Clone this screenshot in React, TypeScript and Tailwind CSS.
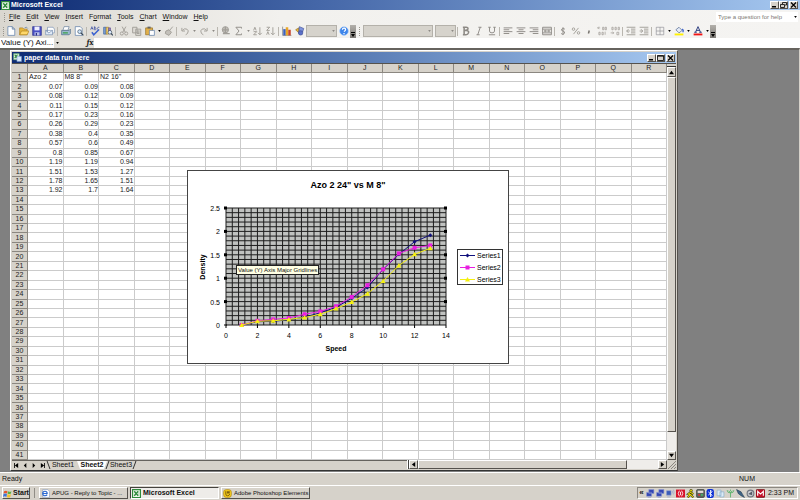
import React from "react";

const COLUMNS = "ABCDEFGHIJKLMNOPQR".split("");

const SHEET: string[][] = [
  ["Azo 2", 'M8 8"', 'N2 16"'],
  ["0.07", "0.09", "0.08"],
  ["0.08", "0.12", "0.09"],
  ["0.11", "0.15", "0.12"],
  ["0.17", "0.23", "0.16"],
  ["0.26", "0.29", "0.23"],
  ["0.38", "0.4", "0.35"],
  ["0.57", "0.6", "0.49"],
  ["0.8", "0.85", "0.67"],
  ["1.19", "1.19", "0.94"],
  ["1.51", "1.53", "1.27"],
  ["1.78", "1.65", "1.51"],
  ["1.92", "1.7", "1.64"],
];

const RAISED = "border border-t-white border-l-white border-r-[#55524d] border-b-[#55524d] bg-[#d6d2ca]";

/* ---------- icons ---------- */

const GREY = "#a19e98";

const ICONS: Record<string, React.ReactNode> = {
  new: <path d="M3 1h7l4 4v10H3z M10 1v4h4" fill="#fff" stroke="#4a6ea0" />,
  open: (
    <>
      <path d="M1 3h5l2 2h5v9H1z" fill="#e9b83c" stroke="#a87a1c" />
      <path d="M4 8h12l-3 6H1z" fill="#ffd86a" stroke="#a87a1c" />
      <path d="M9 3q3-3 5 1" fill="none" stroke="#4a6ea0" />
    </>
  ),
  save: (
    <>
      <path d="M1 1h14v14H1z" fill="#4a50c4" stroke="#2b2f86" />
      <path d="M4 1h8v6H4z" fill="#eef" />
      <path d="M4 10h8v5H4z" fill="#b9bfe8" />
      <path d="M6 11h2v4H6z" fill="#2b2f86" />
    </>
  ),
  mail: (
    <>
      <path d="M4 2h9l2 3v6H4z" fill="#fff" stroke="#6e88ad" />
      <path d="M1 7h11v7H1z M1 7l5 4 6-4" fill="#e2ebf7" stroke="#6e88ad" />
    </>
  ),
  print: (
    <>
      <path d="M5 1h8l-2 6H3z" fill="#fff" stroke="#5b7797" />
      <path d="M1 7h12l2-2v7l-2 2H1z" fill="#9bb9cf" stroke="#42617f" />
      <path d="M3 10h8v2H3z" fill="#3ca24a" />
    </>
  ),
  preview: (
    <>
      <path d="M2 1h8l3 3v11H2z" fill="#fff" stroke="#4a6ea0" />
      <circle cx="9" cy="9" r="3" fill="#cfe6fb" stroke="#345" />
      <path d="M11 11l4 4" stroke="#345" strokeWidth="2" />
    </>
  ),
  spell: (
    <>
      <path d="M1 6l2-5 2 5M2 4h3M7 1v5h2q2-1 0-3H7q3-1 0-2M15 2q-3-1-3 2t3 2" fill="none" stroke="#31479e" />
      <path d="M3 10l3 4 8-8" fill="none" stroke="#3c63cf" strokeWidth="2.5" />
    </>
  ),
  research: (
    <>
      <path d="M1 2h4v11H1z" fill="#7aa0d8" stroke="#3a5f9c" />
      <path d="M5 2h4v11H5z" fill="#f0cd6b" stroke="#9c7a2a" />
      <path d="M9 3h3v9H9z" fill="#9a83c8" stroke="#5d4a91" />
      <circle cx="11" cy="10" r="3" fill="#dceafb" stroke="#345" />
      <path d="M13 12l3 3" stroke="#345" strokeWidth="2" />
    </>
  ),
  cut: (
    <g fill="none" stroke={GREY} strokeWidth="1.5">
      <path d="M5 1l5 9M11 1L6 10" />
      <circle cx="4.500" cy="12" r="2.500" />
      <circle cx="11.500" cy="12" r="2.500" />
    </g>
  ),
  copy: <path d="M1 2h7v9H1z M6 5h8v10H6z M8 8h4M8 10h4M8 12h4" fill="#dedbd5" stroke={GREY} strokeWidth="1.5" />,
  paste: (
    <>
      <path d="M1 3h11v11H1z" fill="#e2b04a" stroke="#8f6718" />
      <path d="M4 1h5v3H4z" fill="#666" />
      <path d="M7 7h8v8H7z" fill="#fff" stroke="#4a6ea0" />
    </>
  ),
  painter: <path d="M14 1l-5 6M3 8l5-2 4 4-4 5-6-3z" fill="#c3c0ba" stroke={GREY} strokeWidth="1.5" />,
  undo: <path d="M3 3v5h5M4 7q3-4 7-2t1 7l-3 2" fill="none" stroke={GREY} strokeWidth="1.5" />,
  redo: <path d="M13 3v5H8M12 7q-3-4-7-2t-1 7l3 2" fill="none" stroke={GREY} strokeWidth="1.5" />,
  link: (
    <>
      <circle cx="7" cy="6" r="5" fill="#c3c0ba" stroke={GREY} strokeWidth="1.5" />
      <path d="M3 12h5M8 12h6M2 6h10M7 1v10" stroke={GREY} strokeWidth="2" />
    </>
  ),
  sum: <path d="M12 4V2H3l5 6-5 6h9v-2" fill="none" stroke="#8f8c86" strokeWidth="1.5" />,
  sortA: <path d="M1 7l2-5 2 5M1 9h5l-5 5h5M11 2v12M8 11l3 3 3-3" fill="none" stroke={GREY} strokeWidth="1.5" />,
  sortD: <path d="M1 2h5L1 7h5M1 14l2-5 2 5M11 2v12M8 11l3 3 3-3" fill="none" stroke={GREY} strokeWidth="1.5" />,
  chart: (
    <>
      <path d="M1 1v14h14" fill="none" stroke="#666" />
      <path d="M2 5h4v10H2z" fill="#3b62c0" />
      <path d="M6 2h4v13H6z" fill="#e8a528" />
      <path d="M10 6h4v9h-4z" fill="#c8452c" />
    </>
  ),
  draw: (
    <>
      <path d="M1 6l5-3v8z" fill="#e9b83c" stroke="#8f6718" />
      <path d="M7 1l7 3-2 6-6 2z" fill="#7f94dd" stroke="#3d4d93" />
      <circle cx="9" cy="11" r="3.500" fill="#5a6fc8" stroke="#3d4d93" />
    </>
  ),
  help: (
    <>
      <circle cx="8" cy="8" r="7" fill="#3f86ea" stroke="#b6d3f8" />
      <path d="M5.500 6q0-3 3-2.500t1.500 3.500L8 9M8 11v2" fill="none" stroke="#fff" strokeWidth="2" />
    </>
  ),
  bold: <path d="M3 2h5q4 0 3 3-1 2-3 2H5h4q4 1 3 4-1 3-4 3H3M5 2v12" fill="none" stroke="#8d8a85" strokeWidth="2.5" />,
  italic: <path d="M7 2h5M4 14h5M10 2L6 14" fill="none" stroke="#8d8a85" strokeWidth="1.5" />,
  underline: <path d="M2 2h4M10 2h4M4 2v6q0 3 4 3t4-3V2M3 14h10" fill="none" stroke="#8d8a85" strokeWidth="1.5" />,
  alignLeft: <path d="M1 3h14M1 6h9M1 9h14M1 12h9" stroke="#8d8a85" strokeWidth="1.5" />,
  alignCenter: <path d="M1 3h14M4 6h8M1 9h14M4 12h8" stroke="#8d8a85" strokeWidth="1.5" />,
  alignRight: <path d="M1 3h14M6 6h9M1 9h14M6 12h9" stroke="#8d8a85" strokeWidth="1.5" />,
  merge: <path d="M1 2h14v12H1zM1 5h14M1 11h14M3 8h10M5 6v4M11 6v4" fill="none" stroke="#8d8a85" strokeWidth="1.5" />,
  dollar: <path d="M11 5q-3-2-5 0t2 3 2 4-5 0M8 2v12" fill="none" stroke="#8d8a85" strokeWidth="1.5" />,
  percent: (
    <g fill="none" stroke={GREY} strokeWidth="1.500">
      <circle cx="4" cy="5" r="2" />
      <circle cx="12" cy="11" r="2" />
      <path d="M12 3L4 13" />
    </g>
  ),
  comma: <path d="M8 7v2l-1 3" fill="none" stroke="#77746f" strokeWidth="2.5" />,
  moreDec: <path d="M5 3H1l2-2M1 3l2 2M9 2h2v4H9zM13 2h2v4h-2zM3 10h2v4H3zM8 10h2v4H8zM13 9v5" fill="none" stroke={GREY} strokeWidth="1.2" />,
  lessDec: <path d="M3 2h2v4H3zM8 2h2v4H8zM13 2h2v4h-2zM1 11h5l-2-2M6 11l-2 2M11 10h3v4h-3z" fill="none" stroke={GREY} strokeWidth="1.2" />,
  outdent: <path d="M1 2h14M8 5h7M8 8h7M8 11h7M1 14h14M6 8H1l3-3M1 8l3 3" fill="none" stroke={GREY} strokeWidth="1.5" />,
  indent: <path d="M1 2h14M8 5h7M8 8h7M8 11h7M1 14h14M1 8h5L3 5M6 8l-3 3" fill="none" stroke={GREY} strokeWidth="1.5" />,
  borders: <path d="M2 2h12v12H2zM8 2v12M2 8h12" fill="none" stroke="#8a8a92" strokeWidth="1" />,
  fill: (
    <>
      <path d="M3 6l5-4 5 5-5 4z" fill="#e6ecf7" stroke="#3f5684" />
      <path d="M13 5q3 2 1 5" fill="none" stroke="#3c63cf" strokeWidth="2" />
      <path d="M1 12h14v3H1z" fill="#fff200" />
    </>
  ),
  fontColor: (
    <>
      <path d="M4 10l4-9 4 9M5 7h6M2 10h4M10 10h4" fill="none" stroke="#27397c" strokeWidth="1.5" />
      <path d="M1 12h14v3H1z" fill="#f01414" />
    </>
  ),
  excel: (
    <>
      <path d="M1 1h14v14H1z" fill="#f0f8ee" stroke="#2f8a3c" strokeWidth="2" />
      <path d="M4 4l7 8M11 4l-7 8" stroke="#2f8a3c" strokeWidth="2.500" />
      <path d="M12 4v8" stroke="#8fc496" />
    </>
  ),
  book: (
    <>
      <path d="M1 1h10v11H1z" fill="#e4f4e2" stroke="#58a865" />
      <path d="M3 3l5 6M8 3L3 9" stroke="#2f8a3c" strokeWidth="2" />
      <path d="M7 6h8v9H7z" fill="#d7e8fb" stroke="#7a9ccc" />
    </>
  ),
  flag: (
    <>
      <path d="M2 4q3-2 6 0L7 8Q4 6 1 8z" fill="#e8552b" />
      <path d="M9 4q3 2 6 0l-1 4q-3 2-6 0z" fill="#5bb040" />
      <path d="M1 9q3-2 6 0l-1 5q-3-2-6 0z" fill="#3f72d8" />
      <path d="M8 9q3 2 6 0l-1 5q-3 2-6 0z" fill="#f3c22c" />
    </>
  ),
  ie: (
    <>
      <path d="M3 1h9l3 3v11H3z" fill="#fff" stroke="#7d8fb0" />
      <path d="M3 8h8q0-4-4-4T3 8t4 4q3 0 4-2" fill="none" stroke="#2d6ad0" strokeWidth="2" />
    </>
  ),
  photoshop: (
    <>
      <rect x="1" y="1" width="14" height="14" rx="5" fill="#f2c81c" stroke="#a5830c" />
      <path d="M5 4v5q0 3 3 3t4-3" fill="none" stroke="#6b4f08" strokeWidth="1.5" />
      <path d="M7 4h5v4H7z" fill="#7d6011" />
    </>
  ),
};

const TRAY: { name: string; art: React.ReactNode }[] = [
  { name: "Network one", art: <path d="M5 1h9v7H5zM1 6h9v7H1zM3 15h6" fill="#3346b4" stroke="#8e9bd0" /> },
  { name: "Network two", art: <path d="M5 1h9v7H5zM1 6h9v7H1zM3 15h6" fill="#3346b4" stroke="#8e9bd0" /> },
  {
    name: "Wireless",
    art: (
      <>
        <path d="M1 3h8v8H1zM2 14h6" fill="#3b5cb8" stroke="#8e9bd0" />
        <path d="M11 3q2 2 0 5M13 1q3 4 0 9" fill="none" stroke="#8e9bd0" />
      </>
    ),
  },
  {
    name: "Antivirus",
    art: (
      <>
        <path d="M0 1h16v14H0z" fill="#d8142c" />
        <path d="M6 3q-4 5 0 10M10 3q4 5 0 10M8 5v6" fill="none" stroke="#fff" strokeWidth="1.5" />
      </>
    ),
  },
  {
    name: "Messenger",
    art: (
      <>
        <circle cx="9" cy="3" r="2.500" fill="#e8d800" stroke="#222" />
        <path d="M8 6l-4 3 4 1-5 5M8 10l5 5M8 6l5 3" fill="none" stroke="#222" strokeWidth="3.500" />
        <path d="M8 6l-4 3 4 1-5 5M8 10l5 5M8 6l5 3" fill="none" stroke="#e8d800" strokeWidth="2" />
      </>
    ),
  },
  {
    name: "Scheduler",
    art: (
      <>
        <rect x="1" y="1" width="14" height="14" rx="2" fill="#5d6660" stroke="#222" />
        <path d="M3 3h10v4H3z" fill="#e5d8d8" />
        <path d="M4 9h3v3H4z" fill="#d33" />
        <path d="M9 9h3v3H9z" fill="#4b6" />
      </>
    ),
  },
  {
    name: "Bluetooth",
    art: (
      <>
        <rect x="1" y="0" width="13" height="16" rx="4" fill="#0a2fd6" />
        <path d="M4 5l7 6-3 3V2l3 3-7 6" fill="none" stroke="#fff" strokeWidth="1.5" />
      </>
    ),
  },
  { name: "Documents", art: <path d="M2 2h7v10H2zM7 5h7v9H7z" fill="#dcebf6" stroke="#7fa5c4" /> },
  { name: "Signal", art: <path d="M2 2q0 5 6 5t6-5M8 7v8M5 3l3 4 3-4M8 1v3" fill="none" stroke="#56b267" strokeWidth="1.5" /> },
  { name: "Stylus", art: <path d="M1 1l8 4 3 5 3 5-6-3-5-4z" fill="#3f6486" stroke="#20384f" /> },
  {
    name: "Volume",
    art: (
      <>
        <circle cx="8" cy="8" r="6" fill="#c9ccd2" stroke="#70757f" strokeWidth="2" />
        <path d="M4 9l7-5v7z" fill="#555b66" />
      </>
    ),
  },
  {
    name: "Security",
    art: (
      <>
        <rect x="0" y="1" width="16" height="14" rx="2" fill="#c4122b" stroke="#500" />
        <path d="M3 12V4l5 5 5-5v8" fill="none" stroke="#fff" strokeWidth="2" />
      </>
    ),
  },
];

function Icon({ name, className = "size-[10px]" }: { name: string; className?: string }) {
  return (
    <svg viewBox="0 0 16 16" className={`block shrink-0 ${className}`} aria-hidden="true">
      {ICONS[name]}
    </svg>
  );
}

/* ---------- toolbar parts ---------- */

function Tool({ icon }: { icon: string }) {
  return (
    <button type="button" aria-label={icon} className="flex h-full w-[13px] shrink-0 items-center justify-center">
      <Icon name={icon} />
    </button>
  );
}

function Sep() {
  return (
    <span className="flex w-[3px] shrink-0 justify-center">
      <span className="h-[9px] w-px bg-[#b9b6af]" />
    </span>
  );
}

function Drop({ dim = false }: { dim?: boolean }) {
  return (
    <button type="button" aria-label="More choices" className="flex h-full w-[6px] shrink-0 items-center justify-center">
      <svg viewBox="0 0 4 3" className={`h-[2px] w-[3px] ${dim ? "fill-[#8d8a85]" : "fill-black"}`}>
        <path d="M0 0h4L2 3z" />
      </svg>
    </button>
  );
}

function Grip() {
  return <span className="h-[9px] w-px shrink-0 border-l border-dotted border-[#99958d]" />;
}

function BarEnd() {
  return (
    <button type="button" aria-label="Toolbar options" className="flex h-[13px] w-[6px] shrink-0 items-end justify-center bg-linear-to-b from-[#b3b0ab] to-[#7e7b76] pb-px">
      <svg viewBox="0 0 4 5" className="h-[5px] w-[4px]">
        <path d="M0 0h4v1H0zM0 2h4L2 5z" />
      </svg>
    </button>
  );
}

function DisabledCombo({ label, width }: { label: string; width: string }) {
  return (
    <span className={`relative flex h-[12px] shrink-0 ${width}`}>
      <select aria-label={label} disabled className="h-full w-full appearance-none border border-[#b4b1aa] bg-[#d6d3cc]">
        <option />
      </select>
      <span className="absolute inset-y-0 right-px flex items-center">
        <Drop dim />
      </span>
    </span>
  );
}

function WindowButtons({ restore = false }: { restore?: boolean }) {
  const box = `flex h-[8px] w-[9px] items-center justify-center ${RAISED}`;
  return (
    <div className="ml-auto flex shrink-0 items-center">
      <button type="button" aria-label="Minimize" className={box}>
        <svg viewBox="0 0 7 6" className="h-[6px] w-[7px]"><path d="M1 4h4v1.500H1z" /></svg>
      </button>
      <button type="button" aria-label={restore ? "Restore" : "Maximize"} className={box}>
        <svg viewBox="0 0 7 6" className="h-[6px] w-[7px]" fill="none" stroke="#000" strokeWidth="0.8">
          {restore ? <path d="M2.500 2V.5h4V3H5M.5 2.500h4v3h-4z" /> : <path d="M.5 1.200h6M.5.5h6v5h-6z" />}
        </svg>
      </button>
      <button type="button" aria-label="Close" className={`ml-px ${box}`}>
        <svg viewBox="0 0 7 6" className="h-[6px] w-[7px]" stroke="#000" strokeWidth="1.200"><path d="M1 .5l5 5M6 .5l-5 5" /></svg>
      </button>
    </div>
  );
}

function Bars() {
  const menus = ["File", "Edit", "View", "Insert", "Format", "Tools", "Chart", "Window", "Help"];
  return (
    <div className="shrink-0 bg-linear-to-r from-[#dad7d0] via-[#f2f1ee] via-35% to-[#f5f4f2]">
      <nav className="flex h-[14px] items-center pl-[4px]">
        <Grip />
        <ul className="flex gap-[6px] pl-[4px]">
          {menus.map((m) => {
            const at = m === "Format" ? 1 : 0;
            return (
              <li key={m}>
                <button type="button" className="block">
                  {m.slice(0, at)}
                  <span className="underline">{m[at]}</span>
                  {m.slice(at + 1)}
                </button>
              </li>
            );
          })}
        </ul>
        <input
          aria-label="Help question"
          placeholder="Type a question for help"
          className="ml-auto h-[10px] w-[76px] bg-white pl-[2px] text-[6px] leading-[10px] placeholder:text-[#7c7974]"
        />
        <span className="mr-[2px] flex h-[10px] bg-white">
          <Drop />
        </span>
      </nav>
      <div className="flex h-[14px] items-center pl-[3px]">
        <Grip />
        <Tool icon="new" /><Tool icon="open" /><Tool icon="save" /><Tool icon="mail" /><Sep />
        <Tool icon="print" /><Tool icon="preview" /><Sep />
        <Tool icon="spell" /><Tool icon="research" /><Sep />
        <Tool icon="cut" /><Tool icon="copy" /><Tool icon="paste" /><Drop /><Tool icon="painter" /><Sep />
        <Tool icon="undo" /><Drop dim /><Tool icon="redo" /><Drop dim /><Sep />
        <Tool icon="link" /><Tool icon="sum" /><Drop dim /><Tool icon="sortA" /><Tool icon="sortD" /><Sep />
        <Tool icon="chart" /><Tool icon="draw" />
        <DisabledCombo label="Zoom" width="w-[31px]" />
        <Tool icon="help" />
        <BarEnd />
        <span className="flex w-[7px] shrink-0 justify-center"><Grip /></span>
        <DisabledCombo label="Font" width="w-[70px]" />
        <span className="w-[2px] shrink-0" />
        <DisabledCombo label="Font size" width="w-[21px]" />
        <Sep />
        <Tool icon="bold" /><Tool icon="italic" /><Tool icon="underline" /><Sep />
        <Tool icon="alignLeft" /><Tool icon="alignCenter" /><Tool icon="alignRight" /><Tool icon="merge" /><Sep />
        <Tool icon="dollar" /><Tool icon="percent" /><Tool icon="comma" /><Tool icon="moreDec" /><Tool icon="lessDec" /><Sep />
        <Tool icon="outdent" /><Tool icon="indent" /><Sep />
        <Tool icon="borders" /><Drop /><Tool icon="fill" /><Drop /><Tool icon="fontColor" /><Drop />
        <BarEnd />
      </div>
      <div className="flex h-[10px] items-stretch text-[8px] leading-[10px]">
        <input aria-label="Name box" defaultValue="Value (Y) Axi..." className="w-[54px] bg-white pl-px" />
        <Drop />
        <span className="w-[26px] bg-[#e4e1db]" />
        <button type="button" className="w-[8px] font-serif font-bold italic">fx</button>
        <input aria-label="Formula" className="min-w-0 flex-1 bg-white" />
      </div>
    </div>
  );
}

/* ---------- chart ---------- */

const PLOT = { left: 38, top: 37, width: 220, height: 117 };
const px = (v: number) => PLOT.left + (v / 14) * PLOT.width;
const py = (v: number) => PLOT.top + PLOT.height - (v / 2.5) * PLOT.height;

const SERIES = [
  { label: "Series1", color: "#10107c", shape: "diamond" },
  { label: "Series2", color: "#e81ee0", shape: "square" },
  { label: "Series3", color: "#f4f012", shape: "triangle" },
].map((s, col) => ({
  ...s,
  points: SHEET.map((row, i) => [px(i + 1), py(i === 0 ? 0 : Number(row[col]))] as const),
}));

function Marker({ x, y, shape, color }: { x: number; y: number; shape: string; color: string }) {
  if (shape === "square") return <rect x={x - 2} y={y - 2} width="4" height="4" fill={color} />;
  if (shape === "triangle") return <path d={`M${x} ${y - 2.5}l2.500 4.500h-5z`} fill={color} />;
  return <path d={`M${x} ${y - 2}l2 2-2 2-2-2z`} fill={color} />;
}

function Chart() {
  const range = (n: number) => Array.from({ length: n }, (_, i) => i);
  return (
    <figure className="absolute top-[106px] left-[175px] h-[194px] w-[322px] border border-[#444] bg-white">
      <svg viewBox="0 0 320 192" className="block h-full w-full text-[7px]" aria-label="Density against speed">
        <text x="160" y="17" textAnchor="middle" className="text-[9px] font-bold">Azo 2 24" vs M 8"</text>
        <rect x={PLOT.left} y={PLOT.top} width={PLOT.width} height={PLOT.height} fill="#c0c2c0" />
        <g stroke="#1c1c1c" strokeWidth="1">
          {range(36).map((i) => (
            <path key={`v${i}`} d={`M${px(i * 0.4)} ${PLOT.top}v${PLOT.height}`} />
          ))}
          {range(26).map((i) => (
            <path key={`h${i}`} d={`M${PLOT.left} ${py(i * 0.1)}h${PLOT.width}`} />
          ))}
        </g>
        {range(6).map((i) => (
          <g key={i}>
            <text x={PLOT.left - 6} y={py(i * 0.5) + 3} textAnchor="end">{i * 0.5}</text>
            <path d={`M${PLOT.left - 2} ${py(i * 0.5)}h3`} stroke="#000" />
            {i > 0 && <rect x={PLOT.left - 2} y={py(i * 0.5) - 1.5} width="3" height="3" />}
            {i > 0 && <rect x={PLOT.left + PLOT.width - 2} y={py(i * 0.5) - 1.5} width="3" height="3" />}
          </g>
        ))}
        {range(8).map((i) => (
          <g key={i}>
            <path d={`M${px(i * 2)} ${PLOT.top + PLOT.height}v3`} stroke="#000" />
            <text x={px(i * 2)} y={PLOT.top + PLOT.height + 13} textAnchor="middle">{i * 2}</text>
          </g>
        ))}
        {SERIES.map((s) => (
          <g key={s.label}>
            <polyline points={s.points.map((p) => p.join(",")).join(" ")} fill="none" stroke={s.color} strokeWidth="1" />
            {s.points.map(([x, y]) => (
              <Marker key={x} x={x} y={y} shape={s.shape} color={s.color} />
            ))}
          </g>
        ))}
        <text x="148" y="180" textAnchor="middle" className="font-bold">Speed</text>
        <text transform="translate(17 96) rotate(-90)" textAnchor="middle" className="font-bold">Density</text>
        <rect x="269.500" y="78.500" width="45" height="35" fill="#fff" stroke="#333" />
        {SERIES.map((s, i) => (
          <g key={s.label}>
            <path d={`M272 ${84.5 + i * 12}h15`} stroke={s.color} />
            <Marker x={279.5} y={84.5 + i * 12} shape={s.shape} color={s.color} />
            <text x="289" y={87 + i * 12}>{s.label}</text>
          </g>
        ))}
      </svg>
      <figcaption className="absolute top-[94px] left-[48px] border border-[#222] bg-[#ffffe4] px-px text-[6px] leading-[8px] whitespace-nowrap">
        Value (Y) Axis Major Gridlines
      </figcaption>
    </figure>
  );
}

/* ---------- workbook window ---------- */

function Grid() {
  const head = "border-r border-b border-[#8b8780] bg-[#d6d2ca] p-0 text-center font-normal";
  return (
    <div className="relative min-w-0 flex-1 overflow-hidden bg-white">
      <table className="h-full w-full table-fixed border-separate border-spacing-0 text-[7px] leading-[8px] text-[#222]">
        <colgroup>
          <col className="w-[16px]" />
          {COLUMNS.map((c) => <col key={c} />)}
        </colgroup>
        <thead>
          <tr>
            <td className={head} />
            {COLUMNS.map((c) => <th key={c} scope="col" className={head}>{c}</th>)}
          </tr>
        </thead>
        <tbody>
          {Array.from({ length: 41 }, (_, r) => (
            <tr key={r}>
              <th scope="row" className={head}>{r + 1}</th>
              {COLUMNS.map((c, i) => (
                <td key={c} className={`border-r border-b border-[#cbcbcb] p-0 whitespace-nowrap ${r === 0 ? "pl-px text-left" : "text-right"}`}>
                  {SHEET[r]?.[i]}
                </td>
              ))}
            </tr>
          ))}
        </tbody>
      </table>
      <Chart />
    </div>
  );
}

function Arrow({ d, label, className }: { d: string; label: string; className: string }) {
  return (
    <button type="button" aria-label={label} className={`flex shrink-0 items-center justify-center ${className}`}>
      <svg viewBox="0 0 6 6" className="size-[5px]"><path d={d} /></svg>
    </button>
  );
}

function SheetTabs() {
  const slash = "h-full w-px shrink-0 bg-[#333]";
  return (
    <div className="flex h-[9px] shrink-0 items-stretch">
      <div className="flex min-w-0 basis-[395px] items-stretch border-t border-[#66635e]">
        <Arrow label="First sheet" d="M0 0h1v6H0zM5 0v6L1 3z" className="w-[9px]" />
        <Arrow label="Previous sheet" d="M4 0v6L1 3z" className="w-[8px]" />
        <Arrow label="Next sheet" d="M2 0v6l3-3z" className="w-[9px]" />
        <Arrow label="Last sheet" d="M5 0h1v6H5zM1 0v6l4-3z" className="w-[8px]" />
        <span className={`ml-[2px] skew-x-[20deg] ${slash}`} />
        <button type="button" className="w-[28px]">Sheet1</button>
        <button type="button" className="w-[30px] bg-white font-bold [clip-path:polygon(0_0,100%_0,27px_100%,3px_100%)]">Sheet2</button>
        <span className={`-skew-x-[20deg] ${slash}`} />
        <button type="button" className="w-[26px]">Sheet3</button>
        <span className={`-skew-x-[20deg] ${slash}`} />
      </div>
      <span className="w-[2px] border-l border-white bg-[#44423e]" />
      <Arrow label="Scroll left" d="M5 0v6L1 3z" className={`w-[9px] ${RAISED}`} />
      <div className="flex min-w-0 flex-1 bg-[#efedea]">
        <div className={`w-[87%] ${RAISED}`} />
      </div>
      <Arrow label="Scroll right" d="M1 0v6l4-3z" className={`w-[9px] ${RAISED}`} />
      <svg viewBox="0 0 9 9" className="size-[9px] shrink-0" stroke="#8b8780"><path d="M1 9l8-8M4 9l5-5M7 9l2-2" /></svg>
    </div>
  );
}

function Workbook() {
  return (
    <section className="mr-[121px] flex min-w-0 flex-1 flex-col border border-t-white border-l-white border-r-[#55524d] border-b-[#333] bg-[#d6d2ca] p-px">
      <header className="flex h-[11px] shrink-0 items-center gap-[2px] bg-linear-to-r from-[#0f2c74] to-[#a6c8f0] px-px text-white">
        <Icon name="book" className="size-[9px]" />
        <h2 className="font-bold">paper data run here</h2>
        <WindowButtons />
      </header>
      <div className="flex min-h-0 flex-1 border-t border-[#55524d]">
        <Grid />
        <div className="flex w-[9px] shrink-0 flex-col bg-[#efedea]">
          <span className="h-[3px] border-b border-[#333] bg-[#d6d2ca]" />
          <Arrow label="Scroll up" d="M0 5h6L3 1z" className={`h-[10px] ${RAISED}`} />
          <div className="flex min-h-0 flex-1 flex-col">
            <div className={`h-[95%] ${RAISED}`} />
          </div>
          <Arrow label="Scroll down" d="M0 1h6L3 5z" className={`h-[9px] ${RAISED}`} />
        </div>
      </div>
      <SheetTabs />
    </section>
  );
}

/* ---------- desktop ---------- */

function Taskbar() {
  const tasks = [
    { icon: "ie", label: "APUG - Reply to Topic - ...", active: false },
    { icon: "excel", label: "Microsoft Excel", active: true },
    { icon: "photoshop", label: "Adobe Photoshop Elements", active: false },
  ];
  return (
    <footer className="flex h-[15px] shrink-0 items-center border-t border-white bg-[#d6d2ca] px-[2px]">
      <button type="button" className={`flex h-[12px] w-[28px] items-center gap-px font-bold ${RAISED}`}>
        <Icon name="flag" className="size-[9px]" />
        Start
      </button>
      <span className="mx-[4px] h-[10px] w-px bg-[#908d86]" />
      <div className="flex gap-[2px]">
        {tasks.map((t) => (
          <button
            key={t.label}
            type="button"
            className={`flex h-[12px] w-[89px] items-center gap-[2px] pl-px whitespace-nowrap ${
              t.active
                ? "border border-t-[#44423e] border-l-[#44423e] border-r-white border-b-white bg-[#eeece9] font-bold"
                : `text-[6px] ${RAISED}`
            }`}
          >
            <Icon name={t.icon} className="size-[9px]" />
            {t.label}
          </button>
        ))}
      </div>
      <div className="ml-auto flex h-[12px] w-[161px] items-center border border-t-[#8b8780] border-l-[#8b8780] border-r-white border-b-white">
        <button type="button" aria-label="Show hidden icons" className="w-[7px] text-[8px] leading-[8px] font-bold">«</button>
        {TRAY.map((t) => (
          <button key={t.name} type="button" aria-label={t.name} className="flex w-[10px] justify-center">
            <svg viewBox="0 0 16 16" className="size-[9px]">{t.art}</svg>
          </button>
        ))}
        <time className="ml-auto pr-[3px]">2:33 PM</time>
      </div>
    </footer>
  );
}

export default function App() {
  return (
    <div className="flex h-screen w-full flex-col overflow-hidden bg-[#808080] font-['Liberation_Sans',Arial,sans-serif] text-[7px] leading-[8px] text-[#111]">
      <header className="flex h-[10px] shrink-0 items-center gap-px bg-linear-to-r from-[#0c2870] via-[#4567a8] via-40% to-[#a6c8f0] pr-[2px] pl-px text-white">
        <Icon name="excel" className="size-[9px]" />
        <h1 className="font-bold">Microsoft Excel</h1>
        <WindowButtons restore />
      </header>
      <Bars />
      <main className="flex min-h-0 flex-1 border-t-2 border-r border-t-[#66635e] border-r-[#d6d2ca] bg-[#808080] pb-px pl-[10px]">
        <Workbook />
      </main>
      <div className="flex h-[13px] shrink-0 items-center justify-between border-t border-white bg-[#d6d2ca] pl-[2px]">
        <output>Ready</output>
        <span className="pr-[45px]">NUM</span>
      </div>
      <Taskbar />
    </div>
  );
}
